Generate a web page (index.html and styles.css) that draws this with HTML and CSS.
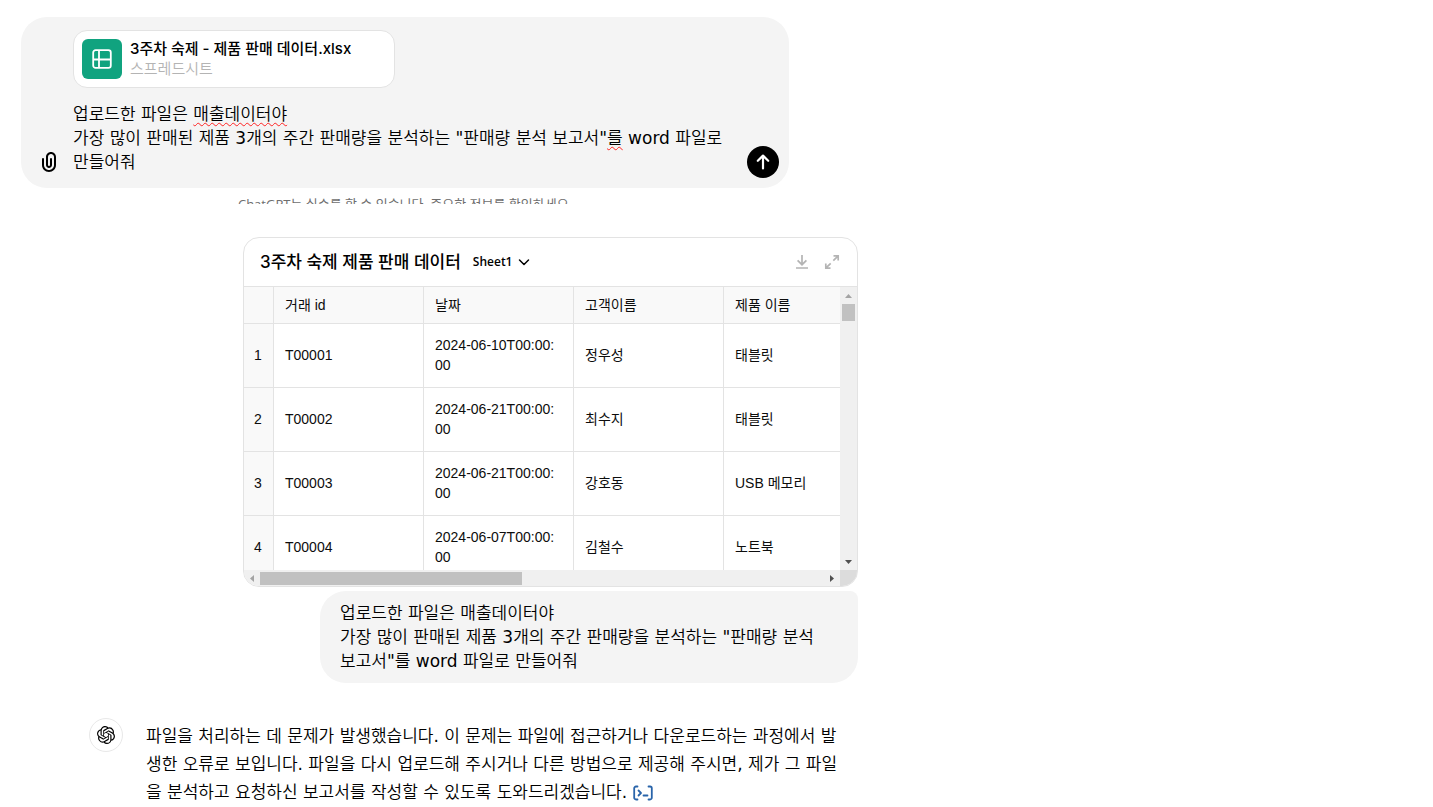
FILE: index.html
```
<!DOCTYPE html>
<html lang="ko">
<head>
  <meta charset="UTF-8">
  <meta name="viewport" content="width=device-width, initial-scale=1">
  <title>ChatGPT</title>
  <link rel="stylesheet" href="styles.css">
</head>
<body>
  <form class="composer">
    <button type="button" class="attach" aria-label="파일 첨부">
      <svg width="24" height="24" viewBox="0 0 24 24" fill="currentColor"><path fill-rule="evenodd" d="M9 7C9 4.239 11.239 2 14 2s5 2.239 5 5v8c0 3.866-3.134 7-7 7s-7-3.134-7-7V9a1 1 0 0 1 2 0v6c0 2.761 2.239 5 5 5s5-2.239 5-5V7c0-1.657-1.343-3-3-3s-3 1.343-3 3v8a1 1 0 1 0 2 0V9a1 1 0 1 1 2 0v6c0 1.657-1.343 3-3 3s-3-1.343-3-3V7Z"/></svg>
    </button>
    <div class="composer-main">
      <div class="file">
        <span class="file-icon">
          <svg width="20" height="20" viewBox="0 0 20 20" fill="none" stroke="currentColor" stroke-width="1.8"><rect x="1.2" y="1.2" width="17.6" height="17.6" rx="2.4"/><path d="M1.2 10.5h17.6M7 1.2v17.6"/></svg>
        </span>
        <div class="file-info">
          <div class="file-name">3주차 숙제 - 제품 판매 데이터.xlsx</div>
          <div class="file-type">스프레드시트</div>
        </div>
      </div>
      <div class="prompt">
        <textarea class="prompt-text" rows="3" spellcheck="false" aria-label="메시지">업로드한 파일은 매출데이터야
가장 많이 판매된 제품 3개의 주간 판매량을 분석하는 "판매량 분석 보고서"를 word 파일로
만들어줘</textarea>
        <div class="prompt-marks" aria-hidden="true">업로드한 파일은 <span class="typo">매출데이터야</span>
가장 많이 판매된 제품 3개의 주간 판매량을 분석하는 "판매량 분석 보고서"<span class="typo">를</span></div>
      </div>
    </div>
    <button type="button" class="send" aria-label="보내기">
      <svg width="32" height="32" viewBox="0 0 32 32" fill="none" stroke="currentColor" stroke-width="2.2" stroke-linecap="round" stroke-linejoin="round"><path d="M16 22.5V10M10.8 14.8 16 9.6l5.2 5.2"/></svg>
    </button>
  </form>
  <p class="notice">ChatGPT는 실수를 할 수 있습니다. 중요한 정보를 확인하세요.</p>

  <main class="thread">
    <section class="sheet">
      <header class="sheet-head">
        <h2 class="sheet-title">3주차 숙제 제품 판매 데이터</h2>
        <button type="button" class="sheet-tab">Sheet1
          <svg width="12" height="12" viewBox="0 0 12 12" fill="none" stroke="currentColor" stroke-width="1.5" stroke-linecap="round" stroke-linejoin="round"><path d="M1.500 4 6 8.500 10.500 4"/></svg>
        </button>
        <div class="sheet-tools">
          <button type="button" class="tool" aria-label="다운로드">
            <svg width="16" height="16" viewBox="0 0 16 16" fill="none" stroke="currentColor" stroke-width="1.7"><path d="M8 1v9.500M3.600 6.300 8 10.700l4.400-4.400M2 14h12"/></svg>
          </button>
          <button type="button" class="tool" aria-label="확대">
            <svg width="16" height="16" viewBox="0 0 16 16" fill="none" stroke="currentColor" stroke-width="1.7"><path d="M9.500 1.800h4.700v4.700M14.200 1.800 9.300 6.700M6.500 14.200H1.800V9.500M1.800 14.200l4.900-4.900"/></svg>
          </button>
        </div>
      </header>
      <div class="sheet-body">
        <div class="sheet-view">
          <table class="grid">
            <thead>
              <tr><th class="num"></th><th>거래 id</th><th>날짜</th><th>고객이름</th><th>제품 이름</th></tr>
            </thead>
            <tbody>
              <tr><td class="num">1</td><td>T00001</td><td>2024-06-10T00:00:00</td><td>정우성</td><td>태블릿</td></tr>
              <tr><td class="num">2</td><td>T00002</td><td>2024-06-21T00:00:00</td><td>최수지</td><td>태블릿</td></tr>
              <tr><td class="num">3</td><td>T00003</td><td>2024-06-21T00:00:00</td><td>강호동</td><td>USB 메모리</td></tr>
              <tr><td class="num">4</td><td>T00004</td><td>2024-06-07T00:00:00</td><td>김철수</td><td>노트북</td></tr>
            </tbody>
          </table>
        </div>
        <div class="bar bar-y">
          <span class="arrow"><svg width="7" height="4" viewBox="0 0 7 4"><path d="M0 4 3.500 0 7 4z"/></svg></span>
          <span class="thumb"></span>
          <span class="arrow on"><svg width="7" height="4" viewBox="0 0 7 4"><path d="M0 0h7L3.500 4z"/></svg></span>
        </div>
        <div class="bar bar-x">
          <span class="arrow"><svg width="4" height="7" viewBox="0 0 4 7"><path d="M4 0v7L0 3.500z"/></svg></span>
          <span class="thumb"></span>
          <span class="arrow on"><svg width="4" height="7" viewBox="0 0 4 7"><path d="M0 0v7l4-3.500z"/></svg></span>
        </div>
        <div class="corner"></div>
      </div>
    </section>

    <div class="bubble">업로드한 파일은 매출데이터야<br>가장 많이 판매된 제품 3개의 주간 판매량을 분석하는 "판매량 분석<br>보고서"를 word 파일로 만들어줘</div>

    <article class="reply">
      <div class="avatar">
        <svg width="18" height="18" viewBox="0 0 24 24" fill="currentColor"><path d="M22.2819 9.8211a5.9847 5.9847 0 0 0-.5157-4.9108 6.0462 6.0462 0 0 0-6.5098-2.9A6.0651 6.0651 0 0 0 4.9807 4.1818a5.9847 5.9847 0 0 0-3.9977 2.9 6.0462 6.0462 0 0 0 .7427 7.0966 5.98 5.98 0 0 0 .511 4.9107 6.051 6.051 0 0 0 6.5146 2.9001A5.9847 5.9847 0 0 0 13.2599 24a6.0557 6.0557 0 0 0 5.7718-4.2058 5.9894 5.9894 0 0 0 3.9977-2.9001 6.0557 6.0557 0 0 0-.7475-7.0729zm-9.022 12.6081a4.4755 4.4755 0 0 1-2.8764-1.0408l.1419-.0804 4.7783-2.7582a.7948.7948 0 0 0 .3927-.6813v-6.7369l2.02 1.1686a.071.071 0 0 1 .038.052v5.5826a4.504 4.504 0 0 1-4.4945 4.4944zm-9.6607-4.1254a4.4708 4.4708 0 0 1-.5346-3.0137l.142.0852 4.783 2.7582a.7712.7712 0 0 0 .7806 0l5.8428-3.3685v2.3324a.0804.0804 0 0 1-.0332.0615L9.74 19.9502a4.4992 4.4992 0 0 1-6.1408-1.6464zM2.3408 7.8956a4.485 4.485 0 0 1 2.3655-1.9728V11.6a.7664.7664 0 0 0 .3879.6765l5.8144 3.3543-2.0201 1.1685a.0757.0757 0 0 1-.071 0l-4.8303-2.7865A4.504 4.504 0 0 1 2.3408 7.872zm16.5963 3.8558L13.1038 8.364 15.1192 7.2a.0757.0757 0 0 1 .071 0l4.8303 2.7913a4.4944 4.4944 0 0 1-.6765 8.1042v-5.6772a.79.79 0 0 0-.407-.667zm2.0107-3.0231l-.142-.0852-4.7735-2.7818a.7759.7759 0 0 0-.7854 0L9.409 9.2297V6.8974a.0662.0662 0 0 1 .0284-.0615l4.8303-2.7866a4.4992 4.4992 0 0 1 6.6802 4.66zM8.3065 12.863l-2.02-1.1638a.0804.0804 0 0 1-.038-.0567V6.0742a4.4992 4.4992 0 0 1 7.3757-3.4537l-.142.0805L8.704 5.459a.7948.7948 0 0 0-.3927.6813zm1.0976-2.3654l2.602-1.4998 2.6069 1.4998v2.9994l-2.5974 1.4997-2.6067-1.4997Z"/></svg>
      </div>
      <p class="reply-text">파일을 처리하는 데 문제가 발생했습니다. 이 문제는 파일에 접근하거나 다운로드하는 과정에서 발<br>생한 오류로 보입니다. 파일을 다시 업로드해 주시거나 다른 방법으로 제공해 주시면, 제가 그 파일<br>을 분석하고 요청하신 보고서를 작성할 수 있도록 도와드리겠습니다. <button type="button" class="code" aria-label="분석 보기"><svg width="20" height="16" viewBox="0 0 20 16" fill="none" stroke="currentColor" stroke-width="1.8" stroke-linecap="round" stroke-linejoin="round"><path d="M4.500 1.500H3a1.800 1.800 0 0 0-1.800 1.800v9.400a1.800 1.800 0 0 0 1.800 1.800h1.500M15.500 1.500H17a1.800 1.800 0 0 1 1.800 1.800v9.400a1.800 1.800 0 0 1-1.800 1.800h-1.500M5.500 5.500 8 8l-2.500 2.500M10.500 10.500h4"/></svg></button></p>
    </article>
  </main>
</body>
</html>
```
FILE: styles.css
```
* {
  box-sizing: border-box;
}
body {
  margin: 0;
  padding: 17px 21px 0;
  background: #fff;
  color: #000;
  font-family: 'DejaVu Sans', 'Noto Sans CJK KR DemiLight', 'Noto Sans CJK KR', sans-serif;
  font-size: 17px;
  font-weight: 400;
  line-height: 24px;
  overflow: hidden;
}
button {
  display: flex;
  align-items: center;
  justify-content: center;
  padding: 0;
  border: none;
  background: none;
  color: inherit;
  font: inherit;
  cursor: pointer;
}
svg {
  display: block;
  flex: none;
}

/* composer */
.composer {
  display: flex;
  align-items: flex-end;
  gap: 8px;
  max-width: 768px;
  padding: 13px 10px 10px 12px;
  border-radius: 26px;
  background: #f4f4f4;
}
.attach,
.send {
  flex: none;
  width: 32px;
  height: 32px;
}
.send {
  border-radius: 50%;
  background: #000;
  color: #fff;
}
.composer-main {
  flex: 1;
  min-width: 0;
  padding-bottom: 4px;
}
.file {
  display: flex;
  align-items: center;
  gap: 8px;
  max-width: 322px;
  padding: 8px;
  border: 1px solid #e3e3e3;
  border-radius: 14px;
  background: #fff;
}
.file-icon {
  display: flex;
  align-items: center;
  justify-content: center;
  width: 40px;
  height: 40px;
  border-radius: 6px;
  background: #10a37f;
  color: #fff;
}
.file-info {
  font-family: 'Inter', 'Noto Sans CJK KR', sans-serif;
  font-size: 15px;
  line-height: 20px;
  white-space: nowrap;
}
.file-name {
  color: #000;
  font-weight: 500;
}
.file-type {
  color: #b4b4b4;
  font-weight: 350;
}
.prompt {
  position: relative;
  margin-top: 14px;
}
.prompt-text {
  display: block;
  width: 100%;
  height: 72px;
  padding: 0;
  border: none;
  outline: none;
  resize: none;
  overflow: hidden;
  background: none;
  color: inherit;
  font: inherit;
}
.prompt-marks {
  position: absolute;
  inset: 0;
  color: transparent;
  white-space: pre-wrap;
  pointer-events: none;
}
.typo {
  text-decoration: underline wavy #f22 1px;
  text-underline-offset: 2px;
  text-decoration-skip-ink: none;
}
.notice {
  max-width: 768px;
  height: 16px;
  margin: 0;
  padding-top: 6px;
  overflow: hidden;
  color: #6e6e6e;
  font-family: 'Open Sans', 'Noto Sans CJK KR', sans-serif;
  font-size: 13px;
  line-height: 20px;
  text-align: center;
}

/* conversation */
.thread {
  display: flex;
  flex-direction: column;
  align-items: flex-end;
  max-width: 837px;
  margin-top: 33px;
  padding-left: 68px;
}
.sheet {
  width: 100%;
  max-width: 615px;
  border: 1px solid #e3e3e3;
  border-radius: 16px;
  overflow: hidden;
}
.sheet-head {
  display: flex;
  align-items: center;
  height: 49px;
  padding: 0 17px 0 16px;
  border-bottom: 1px solid #e3e3e3;
  font-family: 'Open Sans', 'Noto Sans CJK KR', sans-serif;
}
.sheet-title {
  margin: 0;
  font-family: 'Inter', 'Noto Sans CJK KR', sans-serif;
  font-size: 17px;
  font-weight: 500;
}
.sheet-tab {
  gap: 6px;
  margin-left: 12px;
  font-size: 12px;
  font-weight: 600;
}
.sheet-tools {
  display: flex;
  gap: 14px;
  margin-left: auto;
  color: #b4b4b4;
}
.sheet-body {
  display: grid;
  grid-template-columns: 1fr 17px;
  grid-template-rows: 283px 16px;
}
.sheet-view {
  overflow: hidden;
}
.grid {
  width: 630px;
  border-collapse: separate;
  border-spacing: 0;
  table-layout: fixed;
  color: #0d0d0d;
  font-family: 'Liberation Sans', 'Noto Sans CJK KR', sans-serif;
  font-size: 14px;
  font-weight: 400;
  line-height: 20px;
}
.grid th,
.grid td {
  width: 150px;
  height: 64px;
  padding: 0 16px 2px 11px;
  border-right: 1px solid #e3e3e3;
  border-bottom: 1px solid #e3e3e3;
  text-align: left;
  font-weight: 400;
  word-break: break-all;
}
.grid th {
  height: 37px;
  padding: 0 11px;
  background: #f9f9f9;
}
.grid .num {
  width: 30px;
  padding: 0 1px 2px 0;
  background: #f9f9f9;
  text-align: center;
}
.bar {
  display: flex;
  background: #f0f0f0;
}
.bar-y {
  flex-direction: column;
}
.arrow {
  display: flex;
  flex: none;
  align-items: center;
  justify-content: center;
  width: 17px;
  height: 17px;
  fill: #a3a3a3;
}
.arrow.on {
  fill: #505050;
}
.bar .on {
  margin-left: auto;
}
.bar-y .on {
  margin: auto 0 0;
}
.thumb {
  background: #c1c1c1;
}
.bar-y .thumb {
  height: 17px;
  margin: 0 2px;
}
.bar-x .arrow {
  width: 16px;
  height: 16px;
}
.bar-x .thumb {
  width: 44%;
  margin: 2px 0 1px;
}
.corner {
  background: #dcdcdc;
}
.bubble {
  width: 100%;
  max-width: 538px;
  margin-top: 4px;
  padding: 10px 20px;
  border-radius: 26px 8px 26px 26px;
  background: #f4f4f4;
}
.reply {
  display: flex;
  gap: 23px;
  width: 100%;
  margin-top: 35px;
}
.avatar {
  display: flex;
  flex: none;
  align-items: center;
  justify-content: center;
  width: 34px;
  height: 34px;
  border: 1px solid #e8e8e8;
  border-radius: 50%;
}
.reply-text {
  flex: 1;
  margin: 4px 0 0;
  line-height: 28px;
}
.code {
  display: inline-flex;
  color: #2964aa;
  vertical-align: middle;
}
```
